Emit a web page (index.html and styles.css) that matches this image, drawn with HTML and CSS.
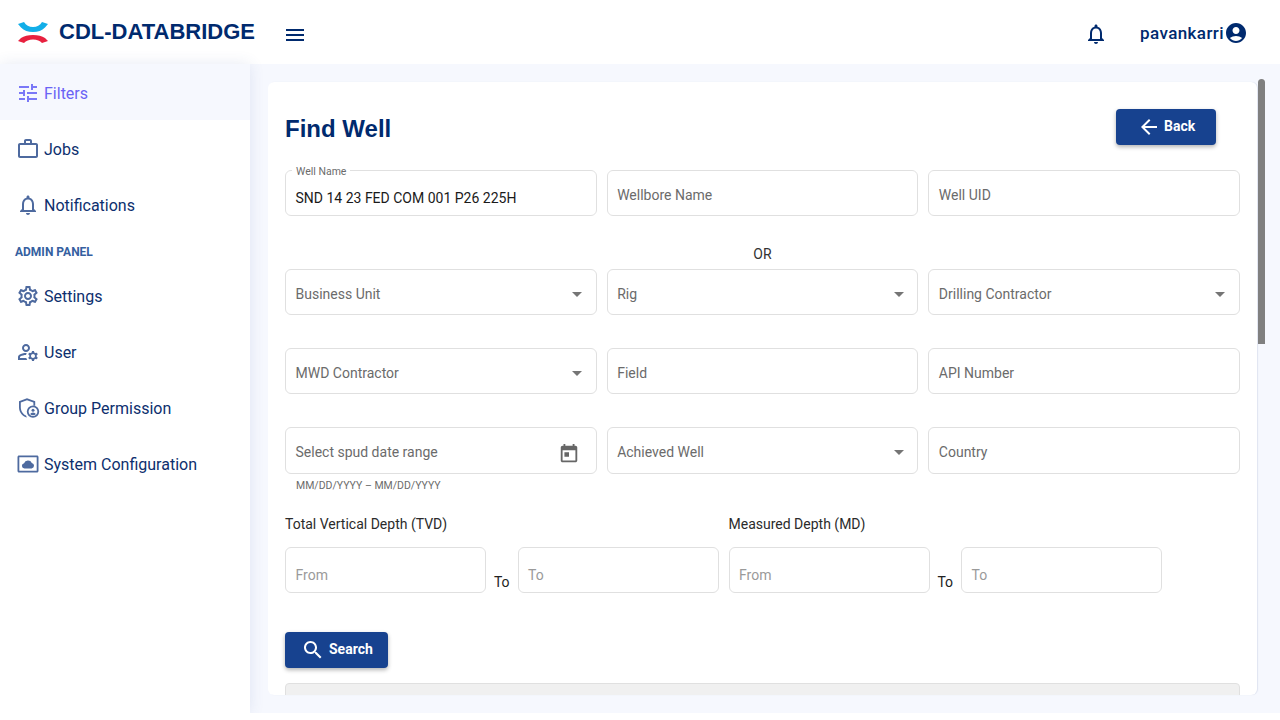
FILE: index.html
```html
<!DOCTYPE html>
<html lang="en">

<head>
    <meta charset="UTF-8">
    <meta name="viewport" content="width=device-width, initial-scale=1.0">
    <title>Find Well - CDL-DATABRIDGE</title>
    <link rel="stylesheet" href="styles.css">
</head>

<body>
    <div class="app">
        <header class="topbar">
            <div class="brand">
                <svg class="brand-logo" viewBox="0 0 32 24" width="32" height="24">
                    <path d="M1 4 L7 2 C9 5.500 12 7 16 7 C20 7 23 5.500 25 2 L31 4 L28 7.500 C25 10.500 21 12 16 12 C11 12 7 10.500 4 7.500 Z" fill="#12aee8"/>
                    <path d="M1 21 L7 23 C9 20.800 12 19.500 16 19.500 C20 19.500 23 20.800 25 23 L31 21 L28 18 C25 16 21 15 16 15 C11 15 7 16 4 18 Z" fill="#e8213f"/>
                </svg>
                <span class="brand-name">CDL-DATABRIDGE</span>
            </div>
            <svg class="icon menu-btn" viewBox="0 0 24 24"><path d="M3 18h18v-2H3v2zm0-5h18v-2H3v2zm0-7v2h18V6H3z"/></svg>
            <div class="topbar-right">
                <svg class="icon" viewBox="0 0 24 24"><path d="M12 22c1.1 0 2-.9 2-2h-4c0 1.1.9 2 2 2zm6-6v-5c0-3.07-1.63-5.64-4.5-6.32V4c0-.83-.67-1.5-1.5-1.5s-1.5.67-1.5 1.5v.68C7.64 5.36 6 7.92 6 11v5l-2 2v1h16v-1l-2-2zm-2 1H8v-6c0-2.48 1.51-4.5 4-4.5s4 2.02 4 4.5v6z"/></svg>
                <div class="user">
                    <span class="user-name">pavankarri</span>
                    <svg class="icon" viewBox="0 0 24 24"><path d="M12 2C6.48 2 2 6.48 2 12s4.48 10 10 10 10-4.48 10-10S17.52 2 12 2zm0 4c1.93 0 3.5 1.57 3.5 3.5S13.93 13 12 13s-3.5-1.57-3.5-3.5S10.07 6 12 6zm0 14c-2.03 0-4.43-.82-6.14-2.88C7.55 15.8 9.68 15 12 15s4.45.8 6.14 2.12C16.43 19.18 14.03 20 12 20z"/></svg>
                </div>
            </div>
        </header>

        <div class="body-row">
            <nav class="sidebar">
                <a class="nav-item active">
                    <svg class="icon" viewBox="0 0 24 24"><path d="M3 17v2h6v-2H3zM3 5v2h10V5H3zm10 16v-2h8v-2h-8v-2h-2v6h2zM7 9v2H3v2h4v2h2V9H7zm14 4v-2H11v2h10zm-6-4h2V7h4V5h-4V3h-2v6z"/></svg>
                    Filters
                </a>
                <a class="nav-item">
                    <svg class="icon" viewBox="0 0 24 24"><path d="M14 6V4h-4v2h4zM4 8v11h16V8H4zm16-2c1.11 0 2 .89 2 2v11c0 1.11-.89 2-2 2H4c-1.11 0-2-.89-2-2l.01-11c0-1.11.88-2 1.99-2h4V4c0-1.11.89-2 2-2h4c1.11 0 2 .89 2 2v2h4z"/></svg>
                    Jobs
                </a>
                <a class="nav-item">
                    <svg class="icon" viewBox="0 0 24 24"><path d="M12 22c1.1 0 2-.9 2-2h-4c0 1.1.9 2 2 2zm6-6v-5c0-3.07-1.63-5.64-4.5-6.32V4c0-.83-.67-1.5-1.5-1.5s-1.5.67-1.5 1.5v.68C7.64 5.36 6 7.92 6 11v5l-2 2v1h16v-1l-2-2zm-2 1H8v-6c0-2.48 1.51-4.5 4-4.5s4 2.02 4 4.5v6z"/></svg>
                    Notifications
                </a>
                <div class="nav-heading">ADMIN PANEL</div>
                <a class="nav-item">
                    <svg class="icon" viewBox="0 0 24 24"><path d="M19.43 12.98c.04-.32.07-.64.07-.98 0-.34-.03-.66-.07-.98l2.11-1.65c.19-.15.24-.42.12-.64l-2-3.46c-.09-.16-.26-.25-.44-.25-.06 0-.12.01-.17.03l-2.49 1c-.52-.4-1.08-.73-1.69-.98l-.38-2.65C14.46 2.18 14.25 2 14 2h-4c-.25 0-.46.18-.49.42l-.38 2.65c-.61.25-1.17.59-1.69.98l-2.49-1c-.06-.02-.12-.03-.18-.03-.17 0-.34.09-.43.25l-2 3.46c-.13.22-.07.49.12.64l2.11 1.65c-.04.32-.07.65-.07.98 0 .33.03.66.07.98l-2.11 1.65c-.19.15-.24.42-.12.64l2 3.46c.09.16.26.25.44.25.06 0 .12-.01.17-.03l2.49-1c.52.4 1.08.73 1.69.98l.38 2.65c.03.24.24.42.49.42h4c.25 0 .46-.18.49-.42l.38-2.65c.61-.25 1.17-.59 1.69-.98l2.49 1c.06.02.12.03.18.03.17 0 .34-.09.43-.25l2-3.46c.12-.22.07-.49-.12-.64l-2.11-1.65zm-1.98-1.71c.04.31.05.52.05.73 0 .21-.02.43-.05.73l-.14 1.13.89.7 1.08.84-.7 1.21-1.27-.51-1.04-.42-.9.68c-.43.32-.84.56-1.25.73l-1.06.43-.16 1.13-.2 1.35h-1.4l-.19-1.35-.16-1.13-1.06-.43c-.43-.18-.83-.41-1.23-.71l-.91-.7-1.06.43-1.27.51-.7-1.21 1.08-.84.89-.7-.14-1.13c-.03-.31-.05-.54-.05-.74s.02-.43.05-.73l.14-1.13-.89-.7-1.08-.84.7-1.21 1.27.51 1.04.42.9-.68c.43-.32.84-.56 1.25-.73l1.06-.43.16-1.13.2-1.35h1.39l.19 1.35.16 1.13 1.06.43c.43.18.83.41 1.23.71l.91.7 1.06-.43 1.27-.51.7 1.21-1.07.85-.89.7.14 1.13zM12 8c-2.21 0-4 1.79-4 4s1.79 4 4 4 4-1.79 4-4-1.79-4-4-4zm0 6c-1.1 0-2-.9-2-2s.9-2 2-2 2 .9 2 2-.9 2-2 2z"/></svg>
                    Settings
                </a>
                <a class="nav-item">
                    <svg class="icon" viewBox="0 0 24 24"><path d="M4 18v-.65c0-.34.16-.66.41-.81C6.1 15.53 8.03 15 10 15c.03 0 .05 0 .08.01.1-.7.3-1.37.59-1.98-.22-.02-.44-.03-.67-.03-2.42 0-4.68.67-6.61 1.82-.88.52-1.39 1.5-1.39 2.53V20h9.26c-.42-.6-.75-1.28-.97-2H4zM10 12c2.21 0 4-1.79 4-4s-1.79-4-4-4-4 1.79-4 4 1.79 4 4 4zm0-6c1.1 0 2 .9 2 2s-.9 2-2 2-2-.9-2-2 .9-2 2-2zM20.75 16c0-.22-.03-.42-.06-.63l1.14-1.01-1-1.73-1.45.49c-.32-.27-.68-.48-1.08-.63L18 11h-2l-.3 1.49c-.4.15-.76.36-1.08.63l-1.45-.49-1 1.73 1.14 1.01c-.03.21-.06.41-.06.63s.03.42.06.63l-1.14 1.01 1 1.73 1.45-.49c.32.27.68.48 1.08.63L16 21h2l.3-1.49c.4-.15.76-.36 1.08-.63l1.45.49 1-1.73-1.14-1.01c.03-.21.06-.41.06-.63zM17 18c-1.1 0-2-.9-2-2s.9-2 2-2 2 .9 2 2-.9 2-2 2z"/></svg>
                    User
                </a>
                <a class="nav-item">
                    <svg class="icon" viewBox="0 0 24 24">
                        <path d="M11 2.2 19.2 5.200v4.500h-1.800V6.500L11 4.200 4.800 6.500v4.800c0 3.700 2.200 7 5.200 8.300l.9 1.900C6.700 20.700 3 16.500 3 11.300V5.200z"/>
                        <path fill-rule="evenodd" d="M17 9.400a6.200 6.200 0 1 0 0 12.400 6.200 6.200 0 0 0 0-12.400zm0 1.800a4.400 4.400 0 1 1 0 8.800 4.400 4.400 0 0 1 0-8.800z"/>
                        <circle cx="17" cy="14.200" r="1.500"/>
                        <path d="M14.200 18.300c.4-1.200 1.500-1.900 2.800-1.900s2.400.7 2.800 1.900c-.7.700-1.700 1-2.800 1s-2.100-.3-2.800-1z"/>
                    </svg>
                    Group Permission
                </a>
                <a class="nav-item">
                    <svg class="icon" viewBox="0 0 24 24">
                        <path fill-rule="evenodd" d="M3 3.500h18c.8 0 1.500.7 1.500 1.500v14c0 .8-.7 1.500-1.500 1.500H3c-.8 0-1.500-.7-1.500-1.500V5c0-.8.7-1.500 1.500-1.500zm.3 1.800v13.400h17.400V5.300z"/>
                        <path d="M8.500 16.500a2.600 2.600 0 0 1-.4-5.170A4.100 4.100 0 0 1 15.800 10.900a2.850 2.850 0 0 1-.2 5.600z"/>
                    </svg>
                    System Configuration
                </a>
            </nav>

            <main class="content">
                <section class="card">
                    <div class="card-head">
                        <h1 class="card-title">Find Well</h1>
                        <button class="btn back-btn" type="button">
                            <svg class="icon" viewBox="0 0 24 24"><path d="M20 11H7.830l5.590-5.590L12 4l-8 8 8 8 1.410-1.410L7.830 13H20v-2z"/></svg>
                            Back
                        </button>
                    </div>

                    <div class="field-grid">
                        <div class="field filled">
                            <span class="float-label">Well Name</span>
                            SND 14 23 FED COM 001 P26 225H
                        </div>
                        <div class="field">Wellbore Name</div>
                        <div class="field">Well UID</div>
                    </div>

                    <div class="or-row">OR</div>

                    <div class="field-grid spaced">
                        <div class="field select">Business Unit</div>
                        <div class="field select">Rig</div>
                        <div class="field select">Drilling Contractor</div>
                        <div class="field select">MWD Contractor</div>
                        <div class="field">Field</div>
                        <div class="field">API Number</div>
                        <div class="field-wrap">
                            <div class="field tall date">
                                Select spud date range
                                <svg class="icon date-icon" viewBox="0 0 24 24"><path d="M19 3h-1V1h-2v2H8V1H6v2H5c-1.110 0-1.990.9-1.990 2L3 19c0 1.100.89 2 2 2h14c1.100 0 2-.9 2-2V5c0-1.100-.9-2-2-2zm0 16H5V8h14v11zM7 10h5v5H7z"/></svg>
                            </div>
                            <div class="hint">MM/DD/YYYY – MM/DD/YYYY</div>
                        </div>
                        <div class="field tall select">Achieved Well</div>
                        <div class="field tall">Country</div>
                    </div>

                    <div class="depth-row">
                        <div class="depth">
                            <div class="depth-title">Total Vertical Depth (TVD)</div>
                            <div class="depth-inputs">
                                <div class="field range">From</div>
                                <span class="to">To</span>
                                <div class="field range">To</div>
                            </div>
                        </div>
                        <div class="depth">
                            <div class="depth-title">Measured Depth (MD)</div>
                            <div class="depth-inputs">
                                <div class="field range">From</div>
                                <span class="to">To</span>
                                <div class="field range">To</div>
                            </div>
                        </div>
                    </div>

                    <button class="btn search-btn" type="button">
                        <svg class="icon" viewBox="0 0 24 24"><path d="M15.500 14h-.79l-.28-.27C15.410 12.590 16 11.110 16 9.500 16 5.910 13.090 3 9.500 3S3 5.910 3 9.500 5.910 16 9.500 16c1.610 0 3.090-.59 4.230-1.570l.27.28v.79l5 4.990L20.490 19l-4.990-5zm-6 0C7.010 14 5 11.990 5 9.500S7.010 5 9.500 5 14 7.010 14 9.500 11.990 14 9.500 14z"/></svg>
                        Search
                    </button>

                    <div class="table-head"></div>
                </section>
                <div class="scroll-thumb"></div>
            </main>
        </div>
    </div>
</body>

</html>
```

FILE: styles.css
```css
/* page */
body {
    margin: 0;
    background-color: #fff;
    font-family: Roboto, "Liberation Sans", sans-serif;
    overflow: hidden;
}

.app {
    height: 713px;
    display: flex;
    flex-direction: column;
}

.icon {
    width: 24px;
    height: 24px;
    fill: currentColor;
    flex-shrink: 0;
}

/* top bar */
.topbar {
    height: 64px;
    flex-shrink: 0;
    display: flex;
    align-items: center;
    color: #002a6e;
    background-color: #fff;
}

.brand {
    display: flex;
    align-items: center;
    gap: 10px;
    margin-left: 17px;
    margin-top: -1px;
}

.brand-name {
    font-family: "Liberation Sans", Arial, sans-serif;
    font-size: 22px;
    font-weight: 700;
    color: #002a6e;
}

.menu-btn {
    margin-left: 28px;
    margin-top: 5px;
}

.topbar-right {
    margin-left: auto;
    display: flex;
    align-items: center;
    margin-right: 32px;
    margin-top: 4px;
}

.user {
    display: flex;
    align-items: center;
    margin-left: 32px;
}

.user-name {
    font-size: 17px;
    font-weight: 500;
    letter-spacing: 0.4px;
    margin-top: -3px;
}

.user .icon {
    margin-top: -2px;
}

/* sidebar */
.body-row {
    flex: 1;
    display: flex;
    min-height: 0;
}

.sidebar {
    width: 250px;
    flex-shrink: 0;
    background-color: #fff;
    box-shadow: 0 0 14px rgba(60, 80, 160, 0.12);
    position: relative;
    z-index: 1;
}

.nav-item {
    height: 56px;
    box-sizing: border-box;
    display: flex;
    align-items: center;
    gap: 4px;
    padding-left: 16px;
    font-size: 16px;
    color: #0d2f6e;
}

.nav-item:nth-child(-n+3) {
    padding-top: 2px;
}

.nav-item .icon {
    color: #4e6a9f;
}

.nav-item.active {
    background-color: #f6f8fe;
    color: #6a63f5;
}

.nav-item.active .icon {
    color: #7a78f7;
}

.nav-heading {
    height: 36px;
    padding: 13px 0 0 15px;
    box-sizing: border-box;
    font-size: 12px;
    font-weight: 700;
    color: #35609f;
}

/* main */
.content {
    flex: 1;
    min-width: 0;
    background-color: #f6f8fe;
    position: relative;
    overflow: hidden;
    padding: 18px 23px 18px 18px;
    box-sizing: border-box;
}

.card {
    height: 100%;
    box-sizing: border-box;
    background-color: #fff;
    border-radius: 6px;
    box-shadow: 1px 0 1px rgba(60, 80, 140, 0.12);
    padding: 27px 17px 0;
    overflow: hidden;
}

.card-head {
    display: flex;
    justify-content: space-between;
    align-items: center;
    height: 36px;
    margin-bottom: 25px;
}

.card-title {
    margin: 4px 0 0;
    font-family: "Liberation Sans", Arial, sans-serif;
    font-size: 24px;
    font-weight: 700;
    color: #002a6e;
}

.btn {
    display: flex;
    align-items: center;
    height: 36px;
    border: none;
    border-radius: 4px;
    background-color: #17428f;
    color: #fff;
    font-family: Roboto, sans-serif;
    font-size: 14px;
    font-weight: 700;
    box-shadow: 0 2px 4px rgba(0, 0, 0, 0.3);
}

.back-btn {
    width: 100px;
    margin-right: 24px;
    padding: 0 0 2px 21px;
    gap: 3px;
}

.back-btn .icon {
    margin-top: 2px;
}

.search-btn {
    width: 103px;
    padding: 0 0 2px 16px;
    gap: 4px;
    margin-bottom: 15px;
}

.search-btn .icon {
    margin-top: 2px;
}

/* fields */
.field-grid {
    display: grid;
    grid-template-columns: repeat(3, 1fr);
    gap: 33px 10px;
    align-items: start;
}

.field {
    height: 46px;
    box-sizing: border-box;
    display: flex;
    align-items: center;
    position: relative;
    padding: 4px 10px 0 9.5px;
    border: 1px solid #e0e0e0;
    border-radius: 6px;
    font-size: 14px;
    color: #6b6b6b;
}

.field.tall {
    height: 47px;
    padding-top: 3px;
}

.field.filled {
    color: #1a1a1a;
    padding-top: 9px;
}

.float-label {
    position: absolute;
    top: -5px;
    left: 6px;
    padding: 0 4px;
    background-color: #fff;
    font-size: 10.5px;
    line-height: 12px;
    color: #6b6b6b;
}

/* dropdown arrow */
.field.select::after {
    content: "";
    position: absolute;
    right: 13.5px;
    top: 22px;
    border-left: 5.5px solid transparent;
    border-right: 5.5px solid transparent;
    border-top: 5.5px solid #757575;
}

.date-icon {
    position: absolute;
    right: 16px;
    top: 15px;
    width: 22px;
    height: 22px;
    color: #666;
}

.field-wrap {
    height: 46px;
}

.hint {
    padding: 5px 0 0 11px;
    font-size: 10.5px;
    line-height: 13px;
    color: #6b6b6b;
}

.or-row {
    height: 53px;
    box-sizing: border-box;
    padding-top: 30px;
    text-align: center;
    font-size: 14px;
    line-height: 16px;
    color: #333;
}

/* depth ranges */
.depth-row {
    display: flex;
    gap: 10px;
    margin-top: 42px;
    margin-bottom: 39px;
}

.depth-title {
    font-size: 14px;
    line-height: 16px;
    color: #2b2b2b;
    margin-bottom: 15px;
}

.depth-inputs {
    display: flex;
    align-items: flex-end;
}

.field.range {
    width: 201px;
    padding-top: 9px;
    color: #9a9a9a;
}

.to {
    width: 31.5px;
    text-align: center;
    font-size: 14px;
    line-height: 16px;
    color: #222;
    margin-bottom: 3px;
}

.table-head {
    height: 30px;
    background-color: #f0f0f0;
    border: 1px solid #e0e0e0;
    border-radius: 4px 4px 0 0;
}

.scroll-thumb {
    position: absolute;
    top: 15px;
    right: 15px;
    width: 7px;
    height: 265px;
    border-radius: 4px 4px 0 0;
    background-color: #808080;
}
```
